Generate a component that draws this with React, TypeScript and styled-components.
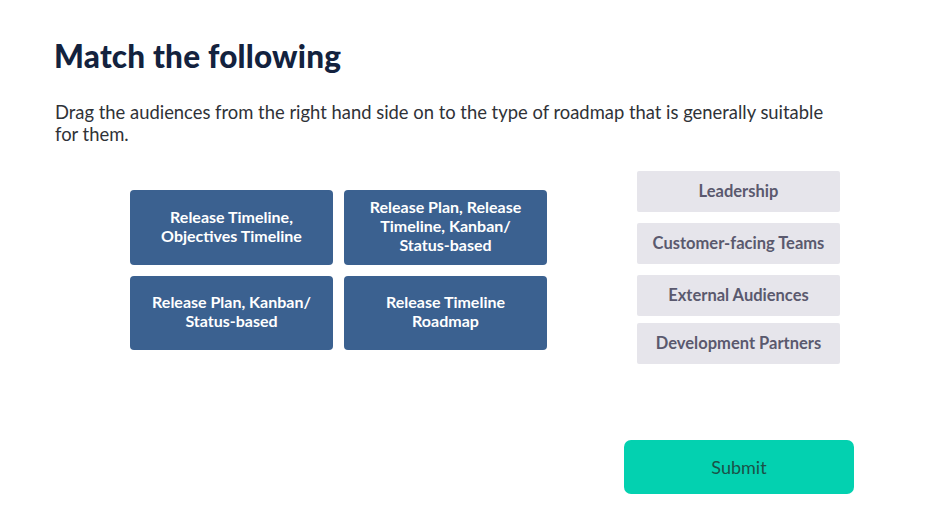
import React from "react";
import styled, { createGlobalStyle } from "styled-components";

const Global = createGlobalStyle`
  html, body { margin: 0; padding: 0; background: #ffffff; }
  body { font-family: "Lato", "Liberation Sans", sans-serif; }
`;

const Page = styled.div`
  width: 940px;
  height: 528px;
  box-sizing: border-box;
  padding: 37px 0 0 54px;
  display: flex;
  flex-direction: column;
`;

const Title = styled.h1`
  margin: 0;
  font-family: "Lato", sans-serif;
  font-weight: 900;
  font-size: 31.5px;
  line-height: 38px;
  color: #13223e;
  letter-spacing: 0.2px;
`;

const Description = styled.p`
  margin: 26px 0 0 1px;
  width: 780px;
  font-family: "Lato", sans-serif;
  font-size: 18.4px;
  line-height: 22px;
  color: #2f3237;
`;

const Board = styled.div`
  display: flex;
  align-items: flex-start;
`;

const TargetGrid = styled.div`
  margin: 45px 0 0 76px;
  display: grid;
  grid-template-columns: 203px 203px;
  grid-template-rows: 75px 74px;
  gap: 11px;
`;

const Target = styled.div`
  background: #3b6190;
  border-radius: 4px;
  display: flex;
  align-items: center;
  justify-content: center;
  text-align: center;
  padding: 0 18px 4px;
  color: #ffffff;
  font-family: "Lato", sans-serif;
  font-weight: 700;
  font-size: 16px;
  line-height: 19px;
`;

const Sources = styled.div`
  margin: 26px 0 0 90px;
  display: flex;
  flex-direction: column;
`;

const Chip = styled.div<{ $gap: number }>`
  width: 203px;
  height: 41px;
  margin-top: ${(p) => p.$gap}px;
  background: #e6e5eb;
  border-radius: 2px;
  display: flex;
  align-items: center;
  justify-content: center;
  padding-bottom: 2px;
  box-sizing: border-box;
  color: #5a596e;
  font-family: "Lato", sans-serif;
  font-weight: 700;
  font-size: 16.5px;
`;

const Footer = styled.div`
  display: flex;
  margin: 76px 0 0 570px;
`;

const Submit = styled.button`
  width: 230px;
  height: 54px;
  border: none;
  border-radius: 7px;
  background: #03d1b0;
  color: #1b5248;
  font-family: "Lato", sans-serif;
  font-size: 18px;
  cursor: pointer;
`;

const targets = [
  "Release Timeline, Objectives Timeline",
  "Release Plan, Release Timeline, Kanban/ Status-based",
  "Release Plan, Kanban/ Status-based",
  "Release Timeline Roadmap",
];

const sources: [string, number][] = [
  ["Leadership", 0],
  ["Customer-facing Teams", 11],
  ["External Audiences", 11],
  ["Development Partners", 7],
];

export default function App() {
  return (
    <>
      <Global />
      <Page>
        <Title>Match the following</Title>
        <Description>
          Drag the audiences from the right hand side on to the type of roadmap that is generally suitable for them.
        </Description>
        <Board>
          <TargetGrid>
            {targets.map((t) => (
              <Target key={t}>{t}</Target>
            ))}
          </TargetGrid>
          <Sources>
            {sources.map(([s, g]) => (
              <Chip key={s} $gap={g}>
                {s}
              </Chip>
            ))}
          </Sources>
        </Board>
        <Footer>
          <Submit>Submit</Submit>
        </Footer>
      </Page>
    </>
  );
}
